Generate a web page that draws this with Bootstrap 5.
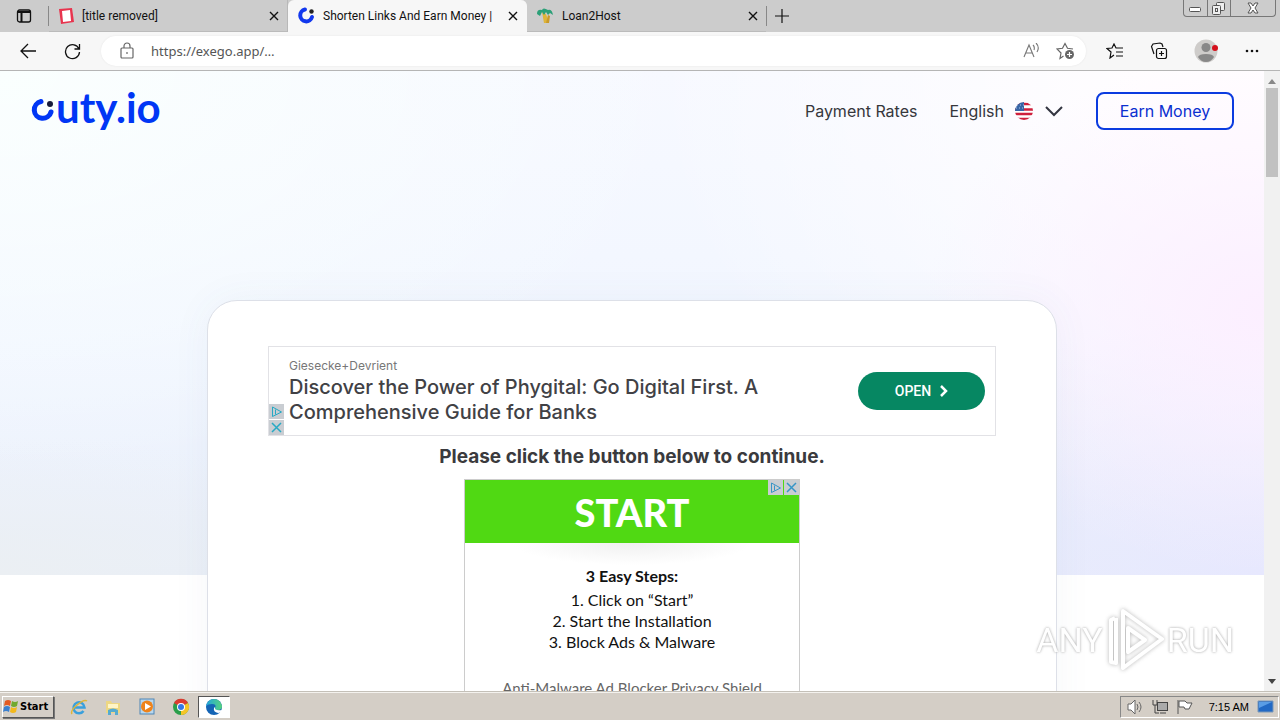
<!DOCTYPE html>
<html lang="en">
<head>
<meta charset="utf-8">
<meta name="viewport" content="width=device-width, initial-scale=1">
<title>Shorten Links And Earn Money</title>
<link href="https://cdn.jsdelivr.net/npm/bootstrap@5.3.0/dist/css/bootstrap.min.css" rel="stylesheet">
<style>
body{font-family:Inter,"Liberation Sans",sans-serif;color:#36373c;background:#fff}
svg{display:block;flex:none}
button{padding:0;border:0;background:none;color:inherit}
a{color:inherit;text-decoration:none}
.tabstrip{height:32px;background:#ccc;font:12px/32px Roboto,sans-serif;color:#111}
.tabitem{width:239px;padding:0 8px 0 10px;border-right:1px solid #b8b8b8;border-bottom:1px solid #bbb}
.tabitem.on{background:#f7f7f7;border-color:#f7f7f7;border-radius:6px 6px 0 0}
.tabname{white-space:nowrap}
.tabtool{width:48px}
.rule{width:1px;height:20px;background:#888}
.winbtns{height:17px;width:93px;border:1px solid #777;border-top:0;border-radius:0 0 4px 4px}
.winbtns button+button{border-left:1px solid #777}
.toolbar{height:39px;background:#f7f7f7;border-bottom:1px solid #b5b5b5;padding:0 20px}
.urlbox{height:30px;border-radius:15px;background:#fff;padding:0 10px 0 18px;box-shadow:0 0 2px #e4e4e4;margin:0 20px 0 20px}
.urlbox input{border:0;outline:0;background:none;font:13px "Noto Sans",sans-serif;color:#555}
.browsertools{gap:26px}
.site{background:
 radial-gradient(ellipse 340px 260px at 100% 48%,#fcefff 0,#fcefff00 100%),
 radial-gradient(ellipse 460px 260px at 100% 100%,#e7e8fe 0,#e7e8fe00 100%),
 radial-gradient(ellipse 620px 460px at 100% 0,#fffdff 20%,#fffdff00 100%),
 radial-gradient(ellipse 700px 400px at 0 0,#fafffe 0,#fafffe00 100%),
 radial-gradient(ellipse 400px 140px at 0 100%,#ebeff3 0,#ebeff300 100%),
 linear-gradient(180deg,#f7f9ff,#f1f6ff 55%,#e9effa);
 background-size:100% 504px;background-repeat:no-repeat;overflow:hidden}
.sitehead{padding:0 30px;height:80px;font-size:16px;line-height:24px}
.brand{color:#0036f5;font:700 42px/48px Lato,sans-serif;padding-bottom:8px}
.earn{width:138px;height:38px;border:2px solid #0b3be0;border-radius:8px;color:#0b2fd0}
.panel{max-width:850px;margin:149px auto 0;padding:45px 60px;border:1px solid #dde0e8;border-radius:30px;background:#fff;height:600px;box-shadow:0 0 40px #5060900d}
.adwide{height:90px;border:1px solid #e2e2e6;padding:0 10px 0 20px}
.adname{font:12px/18px Inter,sans-serif;color:#777}
.adtitle{font:500 20px/25px Inter,sans-serif;color:#414145}
.open{width:127px;height:38px;border-radius:19px;background:#068762;color:#fff;font:500 14px/20px Roboto,sans-serif}
.adtag{width:15px;height:15px;background:#c9cdd2}
.lead-line{font:700 19px/24px Inter,sans-serif;color:#3a3a3d;margin:9px 0 10px}
.adbox{width:336px;height:340px;border:1px solid #ccc;font:16px/21px Lato,sans-serif;color:#111}
.start{height:63px;width:100%;background:#50d913;color:#fff;font:900 38px/62px Lato,sans-serif}
.wedge{height:22px;background:radial-gradient(ellipse 120px 22px at 50% 0,#f0f0f0,#fff)}
.easy{margin-bottom:3px}
.products{font-size:15px;color:#666;margin-top:26px}
.scrollcol{width:16px;background:#f1f1f1}
.thumb{width:12px;height:89px;background:#c1c1c1}
.taskbar{height:28px;background:#d4cec6;border-top:1px solid #f4f2ee;box-shadow:0 -1px #c4c0b8;font:11px/20px "DejaVu Sans Condensed",sans-serif;color:#000;padding:0 1px 0 2px;position:relative}
.startbtn{height:22px;width:52px;border:1px solid;border-color:#fff #555 #555 #fff;box-shadow:1px 1px #777;font:700 11px/20px "DejaVu Sans Condensed",sans-serif}
.edgebtn{width:32px;height:22px;background:#fff;border:1px solid;border-color:#555 #fff #fff #555}
.tray{height:22px;border:1px solid;border-color:#888 #fff #fff #888;padding:0 4px 0 6px;font-family:"Liberation Sans",sans-serif}
.wmark{right:46px;bottom:20px;color:#fff;font:34px/60px Roboto,sans-serif;text-shadow:0 0 3px #aaa,0 0 2px #ccc;opacity:.85}
.wmark svg{filter:drop-shadow(0 0 2px #aaa)}
</style>
</head>
<body class="vh-100 d-flex flex-column overflow-hidden">
<header class="flex-shrink-0">
 <div class="tabstrip d-flex align-items-center">
  <button class="tabtool d-flex justify-content-center" aria-label="Tab actions"><svg width="16" height="16" fill="none" stroke="#111" stroke-width="1.3"><rect x="1.500" y="2" width="13" height="12" rx="2"/><path d="M2 4h12M5.500 5v9" stroke-width="2"/></svg></button>
  <div class="rule"></div>
  <div class="tabitem d-flex align-items-center gap-2 h-100">
   <svg width="15" height="16"><path d="M0 1l13-1 2 14-13 2z" fill="#e8344e"/><path d="M3 3l8-1 1 11-8 1z" fill="#fff"/></svg>
   <span class="tabname flex-grow-1">[title removed]</span>
   <button aria-label="Close tab"><svg width="10" height="10" stroke="#111" stroke-width="1.4"><path d="M1 1l8 8M9 1l-8 8"/></svg></button>
  </div>
  <div class="tabitem on d-flex align-items-center gap-2 h-100">
   <svg width="17" height="17"><path d="M7 2.500A6 6 0 1 0 14 10" fill="none" stroke="#1238ee" stroke-width="4" stroke-linecap="round"/><circle cx="13.500" cy="4.500" r="2.200" fill="#222"/></svg>
   <span class="tabname flex-grow-1">Shorten Links And Earn Money |</span>
   <button aria-label="Close tab"><svg width="10" height="10" stroke="#111" stroke-width="1.400"><path d="M1 1l8 8M9 1l-8 8"/></svg></button>
  </div>
  <div class="tabitem d-flex align-items-center gap-2 h-100 border-end-0">
   <svg width="17" height="17"><path d="M5 5l2 11h5L9 7z" fill="#deb53a"/><path d="M11 8l-2 8h3l1-7z" fill="#c99a2a"/><path d="M0 7q0-5 5-4 1-3 6 0 4-1 5 5l-3-2-2 2-2-3-2 3-2-3-2 4z" fill="#2ba078"/></svg>
   <span class="tabname flex-grow-1">Loan2Host</span>
   <button aria-label="Close tab"><svg width="10" height="10" stroke="#111" stroke-width="1.400"><path d="M1 1l8 8M9 1l-8 8"/></svg></button>
  </div>
  <div class="rule"></div>
  <button class="ms-1 ps-1" aria-label="New tab"><svg width="14" height="14" stroke="#111" stroke-width="1.200"><path d="M7 0v14M0 7h14"/></svg></button>
  <div class="winbtns d-flex ms-auto me-1 align-self-start">
   <button class="w-25 flex-grow-1" aria-label="Minimize"><svg class="mx-auto" width="12" height="12" fill="#fff" stroke="#555"><rect x=".500" y="5.500" width="11" height="4" rx="1"/></svg></button>
   <button class="w-25 flex-grow-1" aria-label="Restore"><svg class="mx-auto" width="13" height="13" fill="#eee" stroke="#555"><rect x="4.500" y=".500" width="8" height="8" rx="1"/><rect x=".500" y="3.500" width="8" height="9" rx="1"/><rect x="3.500" y="6.500" width="2" height="3"/></svg></button>
   <button class="w-50" aria-label="Close"><svg class="mx-auto" width="12" height="12" fill="#fff" stroke="#555"><path d="M1 1h3l2 3 2-3h3L8 6l3 5H8L6 8l-2 3H1l3-5z"/></svg></button>
  </div>
 </div>
 <div class="toolbar d-flex align-items-center">
  <button aria-label="Back"><svg width="16" height="16" fill="none" stroke="#111" stroke-width="1.300"><path d="M16 8H1M8 1L1 8l7 7"/></svg></button>
  <button class="ms-4 ps-1" aria-label="Refresh"><svg width="17" height="17" fill="none" stroke="#111" stroke-width="1.300"><path d="M15 6A7 7 0 1 0 15.500 9M15.500 1v5h-5"/></svg></button>
  <div class="urlbox d-flex flex-grow-1 align-items-center">
   <svg width="16" height="18" fill="none" stroke="#666" stroke-width="1.200"><rect x="2" y="6" width="12" height="10" rx="1"/><path d="M5 6V4a3 3 0 0 1 6 0v2M8 10v2"/></svg>
   <input class="flex-grow-1 ms-3 p-0" aria-label="Address" value="https://exego.app/…">
   <svg width="17" height="16" fill="none" stroke="#777" stroke-width="1.100"><path d="M1 14L6 2l5 12M3 10h6M10 2q2 2 1 5M13 0q4 4 1 9"/></svg>
   <svg class="ms-3" width="20" height="18" fill="none" stroke="#666" stroke-width="1.200"><path d="M7.500 14L4 16.500l1-5.500L1 7l5.500-.700L9 1.500l2.500 4.800L17 7"/><circle cx="13.500" cy="12.500" r="4.500" fill="#666" stroke="none"/><path d="M13.500 10v5M11 12.500h5" stroke="#fff"/></svg>
  </div>
  <div class="browsertools d-flex align-items-center">
   <button aria-label="Favorites"><svg width="18" height="16" fill="none" stroke="#111" stroke-width="1.200"><path d="M8 12l-4 3 1-6-4-3.500L6 5l2-4 2 4h7M10 9h7M10 13h7"/></svg></button>
   <button aria-label="Collections"><svg width="18" height="18" fill="none" stroke="#111" stroke-width="1.200"><rect x="6.500" y="6.500" width="10" height="10" rx="2"/><path d="M11.500 9v5M9 11.500h5M4 12L1.500 4.500 3 2l7-1 2 1 1 3"/></svg></button>
   <button aria-label="Profile"><svg width="24" height="24"><circle cx="12" cy="12" r="11.500" fill="#ceccca"/><circle cx="12" cy="8.500" r="4.500" fill="#888"/><path d="M4 18q1-3 8-3t8 3q-3 5-8 5t-8-5" fill="#888"/><circle cx="21" cy="9" r="3" fill="#d5101c"/></svg></button>
   <button aria-label="More"><svg width="16" height="4" fill="#111"><circle cx="3" cy="2" r="1.300"/><circle cx="8" cy="2" r="1.300"/><circle cx="13" cy="2" r="1.300"/></svg></button>
  </div>
 </div>
</header>
<div class="d-flex flex-grow-1 overflow-hidden position-relative">
 <main class="site flex-grow-1">
  <nav class="sitehead d-flex align-items-center">
   <a href="#" class="brand d-flex align-items-center" aria-label="cuty.io"><svg class="mt-1" width="26" height="26" fill="none"><path d="M11 5.500A8.500 8.500 0 1 0 21 16" stroke="#0036f5" stroke-width="5" stroke-linecap="round"/><circle cx="20" cy="8" r="3" fill="#171b3b"/></svg>uty.io</a>
   <a href="#" class="ms-auto">Payment Rates</a>
   <button class="d-flex align-items-center ms-4 me-2 ps-2">English
    <svg class="ms-2 me-2" width="24" height="20"><defs><clipPath id="flag"><circle cx="12" cy="10" r="9"/></clipPath></defs><g clip-path="url(#flag)"><path fill="#fff" d="M0 0h24v20H0z"/><path d="M0 3h24M0 8.500h24M0 13h24M0 18h24" stroke="#cf203d" stroke-width="2.500"/><path fill="#3765a6" d="M0 0h12v10H0z"/><path d="M5 4h7M4 7h8" stroke="#a9c6e8" stroke-dasharray="1 2"/></g></svg>
    <svg width="20" height="12" fill="none" stroke="#333540" stroke-width="2"><path d="M2 2l8 8 8-8"/></svg></button>
   <button class="earn ms-4">Earn Money</button>
  </nav>
  <section class="panel">
   <div class="adwide d-flex align-items-center justify-content-between position-relative">
    <div><div class="adname">Giesecke+Devrient</div><div class="adtitle">Discover the Power of Phygital: Go Digital First. A<br>Comprehensive Guide for Banks</div></div>
    <button class="open d-flex align-items-center justify-content-center gap-2">OPEN <svg width="9" height="12" fill="none" stroke="#fff" stroke-width="2.500"><path d="M2 1l5 5-5 5"/></svg></button>
    <div class="position-absolute start-0 bottom-0 d-grid" style="row-gap:1px">
     <svg class="adtag" viewBox="0 0 15 15" fill="none" stroke="#27a9c4"><path d="M3.500 3v9.500L12.500 8zM6.500 5.500v5"/></svg>
     <svg class="adtag" viewBox="0 0 15 15" stroke="#27a9c4" stroke-width="1.500"><path d="M3 3l9 9M12 3l-9 9"/></svg></div>
   </div>
   <p class="lead-line text-center">Please click the button below to continue.</p>
   <div class="adbox mx-auto text-center position-relative">
    <button class="start d-block">START</button>
    <div class="position-absolute end-0 top-0 d-flex" style="column-gap:1px">
     <svg class="adtag" viewBox="0 0 15 15" fill="none" stroke="#3795c7"><path d="M3.500 3v9.500L12.500 8zM6.500 5.500v5"/></svg>
     <svg class="adtag" viewBox="0 0 15 15" stroke="#3795c7" stroke-width="1.500"><path d="M3 3l9 9M12 3l-9 9"/></svg></div>
    <div class="wedge"></div>
    <div class="fw-bold easy">3 Easy Steps:</div>
    <div>1. Click on “Start”<br>2. Start the Installation<br>3. Block Ads &amp; Malware</div>
    <div class="products">Anti-Malware Ad Blocker Privacy Shield</div>
   </div>
  </section>
 </main>
 <div class="scrollcol d-flex flex-column align-items-center justify-content-between py-1">
  <div><svg class="mx-auto mb-1 mt-1" width="8" height="5" fill="#888"><path d="M0 5l4-5 4 5z"/></svg><div class="thumb"></div></div>
  <svg class="mb-1" width="8" height="5" fill="#444"><path d="M0 0l4 5 4-5z"/></svg>
 </div>
 <div class="wmark position-absolute d-flex align-items-center"><span>ANY</span><svg width="64" height="64" fill="none" stroke="#fff" stroke-width="4" stroke-linejoin="round"><path d="M20 3l39 28-39 29zM12 10L8 12v42l5 1V10M25 20l17 12-17 12z"/></svg><span>RUN</span></div>
</div>
<footer class="taskbar flex-shrink-0 d-flex align-items-center">
 <button class="startbtn d-flex align-items-center"><svg width="17" height="17"><path d="M2 3q3-2 6 0L7 8q-3-2-6 0z" fill="#e35b22"/><path d="M9 3q3 2 6 0l-1 5q-3 2-6 0z" fill="#72a92e"/><path d="M1 9q3-2 6 0l-1 5q-3-2-6 0z" fill="#3b80cf"/><path d="M8 9q3 2 6 0l-1 5q-3 2-6 0z" fill="#f3b91c"/></svg>Start</button>
 <div class="d-flex align-items-center gap-3 ms-3">
  <button aria-label="Internet Explorer"><svg width="18" height="18" fill="none"><path d="M4.500 9.500h10a5.500 5.500 0 1 0-1 3.500" stroke="#3aa0dc" stroke-width="2.500"/><path d="M2 16Q0 13 7 7t10-4" stroke="#e0b637" stroke-width="1.500"/></svg></button>
  <button aria-label="Explorer"><svg width="18" height="18"><path d="M2 3h5l1 2h8v10H2z" fill="#edd783"/><path d="M4 6h10v4H4z" fill="#fff5c6"/><path d="M4 17v-5q5-3 10 0v5h-3v-3H7v3z" fill="#55abd0"/></svg></button>
  <button aria-label="Media Player"><svg width="18" height="18"><rect x="2" y="1" width="14" height="15" fill="#b8d7ee" stroke="#4f86b5"/><circle cx="9" cy="8.500" r="6" fill="#ee831b"/><path d="M7 5l6 3.500L7 12z" fill="#fff"/></svg></button>
  <button aria-label="Chrome"><svg width="18" height="18"><circle cx="9" cy="9" r="8" fill="#2a9e4a"/><path d="M9 9L2 5a8 8 0 0 1 14 0z" fill="#dc3b30"/><path d="M9 9l7-4a8 8 0 0 1-7 12z" fill="#f5c526"/><circle cx="9" cy="9" r="4" fill="#fff"/><circle cx="9" cy="9" r="3" fill="#3478e5"/></svg></button>
 </div>
 <button class="edgebtn ms-2 d-flex align-items-center justify-content-center" aria-label="Edge"><svg width="18" height="18"><defs><linearGradient id="edge" x2="1"><stop stop-color="#22a5dd"/><stop offset="1" stop-color="#55d27e"/></linearGradient></defs><circle cx="9" cy="9" r="8" fill="#1464b5"/><path d="M1 8Q3 1 9 1t8 7q0 4-4 4t-3-2q2-4-3-4-4 0-6 2" fill="url(#edge)"/><path d="M10 9q-1 4 7 3-1 3-4 3-5-1-4-5" fill="#fff"/></svg></button>
 <div class="tray d-flex align-items-center gap-2 ms-auto">
  <svg width="17" height="16" fill="#fff" stroke="#666"><path d="M1 5h3l4-4v14l-4-4H1z"/><path d="M10 5q2 3 0 6M12 3q4 5 0 10" fill="none"/></svg>
  <svg width="16" height="16" fill="#eee" stroke="#444"><rect x="5.500" y="3.500" width="10" height="8" fill="#aaa"/><path d="M1 1v5h4V1M3 6v8h4M8 14h6" fill="none"/></svg>
  <svg width="17" height="16" fill="#fff" stroke="#555"><path d="M2 1v14M3 2h6l2 2h5l-3 6H9L8 8H3z"/></svg>
  <span class="ms-2">7:15 AM</span>
  <svg width="17" height="14"><path d="M1 1h15v11H1z" fill="#2269c4" stroke="#7a98b8"/><path d="M2 2h13L2 8z" fill="#5a9de5"/></svg>
 </div>
</footer>
<script src="https://cdn.jsdelivr.net/npm/bootstrap@5.3.0/dist/js/bootstrap.bundle.min.js"></script>
</body>
</html>
